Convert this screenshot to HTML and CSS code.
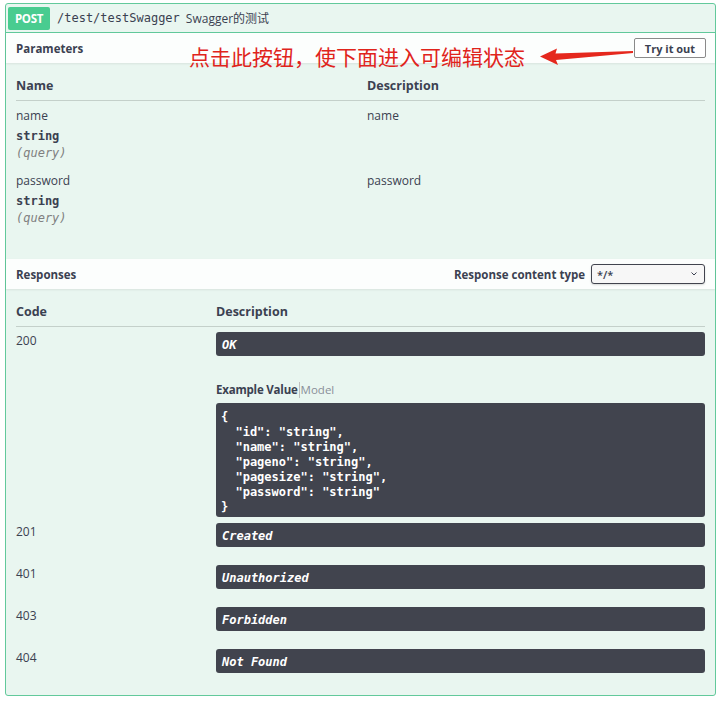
FILE: index.html
```html
<!DOCTYPE html>
<html lang="zh">
<head>
<meta charset="utf-8">
<title>Swagger</title>
<link rel="stylesheet" href="styles.css">
</head>
<body>
<div class="page">
  <div class="opblock">
    <div class="summary">
      <span class="method">POST</span>
      <span class="path">/test/testSwagger</span>
      <span class="desc">Swagger的测试</span>
    </div>

    <div class="section-header">
      <span class="section-title">Parameters</span>
      <button class="try-btn">Try it out</button>
    </div>

    <div class="params">
      <div class="prow phead">
        <div class="pcol-name">Name</div>
        <div class="pcol-desc">Description</div>
      </div>
      <div class="prow pbody">
        <div class="pcol-name">
          <div class="pname">name</div>
          <div class="ptype">string</div>
          <div class="pin">(query)</div>
        </div>
        <div class="pcol-desc"><div class="pname">name</div></div>
      </div>
      <div class="prow pbody">
        <div class="pcol-name">
          <div class="pname">password</div>
          <div class="ptype">string</div>
          <div class="pin">(query)</div>
        </div>
        <div class="pcol-desc"><div class="pname">password</div></div>
      </div>
    </div>

    <div class="section-header">
      <span class="section-title">Responses</span>
      <div class="ctype">
        <span class="ctype-label">Response content type</span>
        <div class="select"><span>*/*</span>
          <svg class="chev" width="6" height="4" viewBox="0 0 6 4"><path d="M0.5 0.5 L3 3 L5.5 0.5" fill="none" stroke="#3b4151" stroke-width="1"/></svg>
        </div>
      </div>
    </div>

    <div class="responses">
      <div class="rrow rhead">
        <div class="rcol-code">Code</div>
        <div class="rcol-desc">Description</div>
      </div>
      <div class="rrow rbody first">
        <div class="rcol-code code">200</div>
        <div class="rcol-desc">
          <div class="bar">OK</div>
          <div class="example-tabs"><span class="tab-active">Example Value</span><span class="tab-sep"></span><span class="tab">Model</span></div>
          <pre class="example">{
  "id": "string",
  "name": "string",
  "pageno": "string",
  "pagesize": "string",
  "password": "string"
}</pre>
        </div>
      </div>
      <div class="rrow rbody">
        <div class="rcol-code code">201</div>
        <div class="rcol-desc"><div class="bar">Created</div></div>
      </div>
      <div class="rrow rbody">
        <div class="rcol-code code">401</div>
        <div class="rcol-desc"><div class="bar">Unauthorized</div></div>
      </div>
      <div class="rrow rbody">
        <div class="rcol-code code">403</div>
        <div class="rcol-desc"><div class="bar">Forbidden</div></div>
      </div>
      <div class="rrow rbody">
        <div class="rcol-code code">404</div>
        <div class="rcol-desc"><div class="bar">Not Found</div></div>
      </div>
    </div>
  </div>

  <div class="annotation">点击此按钮，使下面进入可编辑状态</div>
  <svg class="arrow" width="100" height="20" viewBox="535 46 100 20">
    <path d="M540 56.5 L557 48.5 L555.5 53.5 L633 51 L633 53 L556 60 L558 65 Z" fill="#e5281d"/>
  </svg>
</div>
</body>
</html>
```

FILE: styles.css
```css
html, body {
  margin: 0;
  padding: 0;
  background: #ffffff;
}

body {
  font-family: "Open Sans", "Noto Sans CJK SC", sans-serif;
  color: #3b4151;
  font-size: 12px;
}

.page {
  position: relative;
  padding: 3px 3px 0 5px;
}

.opblock {
  width: 711px;
  box-sizing: border-box;
  border: 1px solid #62c99b;
  border-radius: 3px;
  background: #e9f6f0;
}

.summary {
  display: flex;
  align-items: center;
  height: 28px;
  padding: 0 2px;
  border-bottom: 1px solid #62c99b;
}

.method {
  display: flex;
  align-items: center;
  justify-content: center;
  width: 42px;
  height: 23px;
  background: #49cc90;
  color: #ffffff;
  font-weight: 700;
  font-size: 11.5px;
  border-radius: 2px;
  letter-spacing: -0.3px;
}

.path {
  margin-left: 7px;
  font-family: "DejaVu Sans Mono", monospace;
  font-size: 12px;
  color: #3b4151;
}

.desc {
  margin-left: 6px;
  font-size: 12px;
  color: #3b4151;
}

.section-header {
  display: flex;
  align-items: center;
  justify-content: space-between;
  height: 30px;
  padding: 0 10px;
  background: rgba(255, 255, 255, 0.85);
  box-shadow: 0 1px 2px rgba(0, 0, 0, 0.08);
}

.section-title {
  font-weight: 700;
  font-size: 11.5px;
}

.try-btn {
  width: 72px;
  height: 20px;
  box-sizing: border-box;
  border: 1px solid #8a8a8a;
  border-radius: 2px;
  background: #ffffff;
  font-family: "Open Sans", sans-serif;
  font-weight: 700;
  font-size: 11px;
  color: #3b4151;
  padding: 0;
  margin: 0 -1px 0 0;
}

.params {
  padding: 13px 10px 28px;
}

.prow {
  display: flex;
}

.pcol-name {
  width: 351px;
}

.pcol-desc {
  flex: 1;
}

.phead {
  line-height: 20px;
  padding-bottom: 4px;
  border-bottom: 1px solid #c4d0ca;
  font-weight: 700;
  font-size: 12.5px;
}

.pbody {
  padding: 7px 0 4px;
}

.pname {
  line-height: 16px;
  font-size: 12px;
}

.ptype {
  margin-top: 4px;
  line-height: 16px;
  font-family: "DejaVu Sans Mono", monospace;
  font-weight: 700;
  font-size: 12px;
}

.pin {
  margin-top: 1px;
  line-height: 17px;
  font-family: "DejaVu Sans Mono", monospace;
  font-style: italic;
  font-size: 12px;
  color: #808080;
}

.ctype {
  display: flex;
  align-items: center;
}

.ctype-label {
  font-weight: 700;
  font-size: 11.5px;
  margin-right: 6px;
}

.select {
  display: flex;
  align-items: center;
  justify-content: space-between;
  width: 114px;
  height: 20px;
  box-sizing: border-box;
  padding: 0 7px 0 5px;
  border: 1px solid #41444e;
  border-radius: 3px;
  background: #f7f7f7;
  font-size: 11px;
  font-weight: 600;
  box-shadow: 0 1px 2px rgba(0, 0, 0, 0.15);
}

.responses {
  padding: 13px 10px 9px;
}

.rrow {
  display: flex;
}

.rcol-code {
  width: 200px;
}

.rcol-desc {
  flex: 1;
}

.rhead {
  line-height: 20px;
  padding-bottom: 4px;
  border-bottom: 1px solid #c4d0ca;
  font-weight: 700;
  font-size: 12.5px;
}

.rbody {
  padding: 5px 0 13px;
}

.rbody.first {
  padding-bottom: 1px;
}

.code {
  padding-top: 1px;
  line-height: 16px;
  font-size: 12px;
}

.bar {
  height: 24px;
  line-height: 26px;
  padding: 0 6px;
  background: #41444e;
  border-radius: 3px;
  color: #ffffff;
  font-family: "DejaVu Sans Mono", monospace;
  font-weight: 700;
  font-style: italic;
  font-size: 12px;
  overflow: hidden;
}

.example-tabs {
  display: flex;
  align-items: center;
  margin-top: 26px;
  line-height: 16px;
}

.tab-active {
  font-weight: 700;
  font-size: 11.5px;
  letter-spacing: -0.2px;
}

.tab-sep {
  width: 1px;
  height: 16px;
  margin: 0 1px;
  background: #c0c0c0;
}

.tab {
  font-size: 11.5px;
  color: #8a8f99;
}

.example {
  margin: 5px 0 0;
  padding: 7px 5px 2px;
  background: #41444e;
  border-radius: 3px;
  color: #ffffff;
  font-family: "DejaVu Sans Mono", monospace;
  font-weight: 700;
  font-size: 12px;
  line-height: 15px;
}

.annotation {
  position: absolute;
  left: 189px;
  top: 44px;
  font-family: "Noto Sans CJK SC", sans-serif;
  font-size: 21px;
  line-height: 24px;
  color: #e0241c;
  white-space: nowrap;
}

.arrow {
  position: absolute;
  left: 535px;
  top: 46px;
}
```
